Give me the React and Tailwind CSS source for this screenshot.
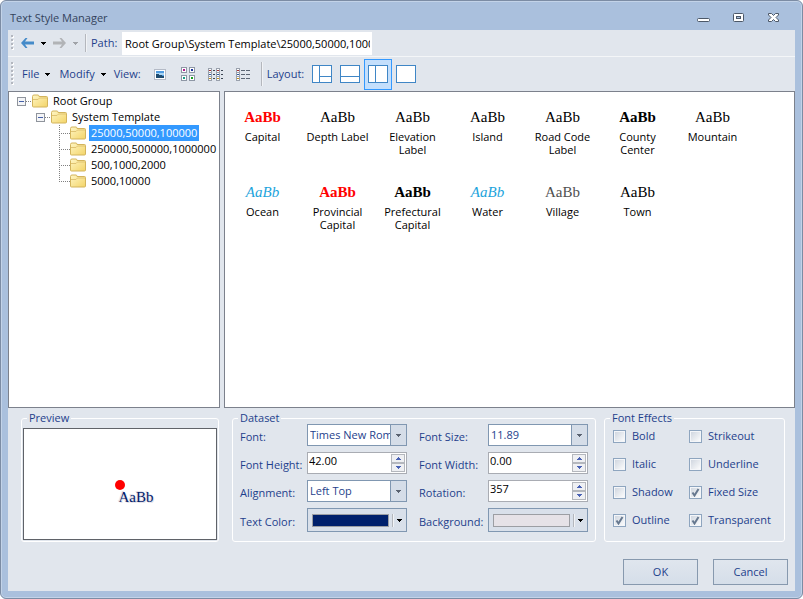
import React from "react";

function Caret({ className = "fill-black" }) {
  return (
    <svg width="5" height="3" viewBox="0 0 5 3" className={`shrink-0 ${className}`} aria-hidden="true" shapeRendering="crispEdges">
      <path d="M0 0h5v1h-1v1h-1v1h-1v-1h-1v-1h-1z" />
    </svg>
  );
}

function NavArrow({ className, flip }) {
  return (
    <svg width="13" height="10" viewBox="0 0 13 10" className={className} aria-hidden="true">
      <path d={flip ? "M6.500 0H8.500L13 5 8.500 10H6.500L9 6.500H0V3.500H9z" : "M6.500 0H4.500L0 5 4.500 10H6.500L4 6.500H13V3.500H4z"} />
    </svg>
  );
}

function Grip({ count }) {
  return (
    <svg width="3" height={count * 4} viewBox={`0 0 3 ${count * 4}`} className="ml-[3px] shrink-0" aria-hidden="true" shapeRendering="crispEdges">
      {Array.from({ length: count }, (_, i) => (
        <g key={i}>
          <rect x="1" y={i * 4 + 1} width="2" height="2" fill="#ffffff" />
          <rect x="0" y={i * 4} width="2" height="2" fill="#b3b7bf" />
        </g>
      ))}
    </svg>
  );
}

function Separator({ className }) {
  return <span className={`w-0.5 shrink-0 border-l border-[#b4b7bd] bg-[#f1f3f6] ${className}`} />;
}

const DOT_COLORS = ["#b0188c", "#18309c", "#189c84", "#18a020"];

function ViewIcon({ kind }) {
  if (kind === "thumbnail") {
    return (
      <svg width="12" height="11" viewBox="0 0 12 11" aria-hidden="true" shapeRendering="crispEdges">
        <rect x="0.500" y="0.500" width="11" height="10" fill="#fff" stroke="#b4bac6" />
        <rect x="2" y="2" width="8" height="7" fill="#4f9be0" />
        <rect x="2" y="4" width="8" height="2" fill="#a8d4f4" />
        <path d="M2 5h3v1h3v1h2v2H2z" fill="#1d4a6e" />
      </svg>
    );
  }
  if (kind === "icons") {
    return (
      <svg width="14" height="14" viewBox="0 0 14 14" aria-hidden="true" shapeRendering="crispEdges">
        {[[0, 0], [8, 0], [0, 8], [8, 8]].map(([x, y], i) => (
          <g key={i}>
            <rect x={x + 0.5} y={y + 0.5} width="5" height="5" fill="#fff" stroke="#8e97a5" />
            <rect x={x + 2} y={y + 2} width="2" height="2" fill={DOT_COLORS[i]} />
          </g>
        ))}
      </svg>
    );
  }
  const columns = kind === "list" ? [0, 8] : [0];
  return (
    <svg width="15" height="13" viewBox="0 0 15 13" aria-hidden="true" shapeRendering="crispEdges">
      {columns.map((x) =>
        [0, 4, 8].map((y, i) => (
          <g key={`${x}-${y}`}>
            <rect x={x + 0.5} y={y + 0.5} width="3" height="4" fill="#fff" stroke="#9aa1ad" />
            <rect x={x + 1} y={y + 2} width="2" height="1" fill={["#a83030", "#2858a0", "#c09018"][i]} />
            <rect x={x + 5} y={y + 2} width="2" height="1" fill="#3c4654" />
          </g>
        ))
      )}
      {kind === "details" &&
        [2, 6, 10].map((y) => (
          <g key={y} fill="#5c6674">
            <rect x="5" y={y} width="4" height="1" />
            <rect x="10" y={y} width="4" height="1" />
          </g>
        ))}
    </svg>
  );
}

const LAYOUTS = [
  { name: "Tree, list and properties", lines: "M7.500 0v18M8 11.500h12" },
  { name: "List and properties", lines: "M0 11.500h20" },
  { name: "Tree and list", lines: "M7.500 0v18", selected: true },
  { name: "List only", lines: "" },
];

function LayoutIcon({ lines }) {
  return (
    <svg width="20" height="18" viewBox="0 0 20 18" className="shrink-0" aria-hidden="true" shapeRendering="crispEdges">
      <rect x="0.500" y="0.500" width="19" height="17" fill="#fff" stroke="#3f86c6" />
      <path d={lines} fill="none" stroke="#3f86c6" />
    </svg>
  );
}

function Folder() {
  return (
    <svg width="16" height="14" viewBox="0 0 16 14" className="shrink-0" aria-hidden="true">
      <defs>
        <linearGradient id="folder" x1="0" y1="0" x2="1" y2="1">
          <stop offset="0" stopColor="#fff6c4" />
          <stop offset="1" stopColor="#f3d468" />
        </linearGradient>
      </defs>
      <path d="M0.500 2.500q0-1.500 1.500-1.500h4q1 0 1 1.500h7.500q1 0 1 1v8.500q0 1-1 1h-13q-1 0-1-1z" fill="url(#folder)" stroke="#d3b45c" />
      <path d="M1 5.500h5l1.500-1.500H15" fill="none" stroke="#dfc373" />
    </svg>
  );
}

function ExpandBox() {
  return (
    <svg width="9" height="9" viewBox="0 0 9 9" className="shrink-0" aria-hidden="true" shapeRendering="crispEdges">
      <rect x="0.500" y="0.500" width="8" height="8" fill="#f4f5f7" stroke="#8f949c" />
      <rect x="2" y="4" width="5" height="1" fill="#4560a8" />
    </svg>
  );
}

function Branch({ d, width }) {
  return (
    <svg width={width} height="16" viewBox={`0 0 ${width} 16`} className="shrink-0" aria-hidden="true" shapeRendering="crispEdges">
      <path d={d} fill="none" stroke="#808080" strokeDasharray="1 1" />
    </svg>
  );
}

const LEAVES = ["25000,50000,100000", "250000,500000,1000000", "500,1000,2000", "5000,10000"];

function Tree() {
  return (
    <ul className="w-[212px] shrink-0 overflow-auto border border-[#7c818c] bg-white pt-px pl-2 text-[11px] leading-4 whitespace-nowrap text-black">
      <li>
        <div className="flex h-4 items-center">
          <ExpandBox />
          <Branch width={6} d="M0 8.500h6" />
          <Folder />
          <span className="pl-[5px]">Root Group</span>
        </div>
        <ul>
          <li>
            <div className="flex h-4 items-center pl-[19px]">
              <ExpandBox />
              <Branch width={6} d="M0 8.500h6" />
              <Folder />
              <span className="pl-[5px]">System Template</span>
            </div>
            <ul>
              {LEAVES.map((name, i) => (
                <li key={name} className="flex h-4 items-center pl-[42px]">
                  <Branch width={11} d={i === LEAVES.length - 1 ? "M0.500 0v8M0 8.500h11" : "M0.500 0v16M0 8.500h11"} />
                  <Folder />
                  <span className={`ml-[3px] px-0.5 ${i === 0 ? "bg-[#3399ff] text-white" : ""}`}>{name}</span>
                </li>
              ))}
            </ul>
          </li>
        </ul>
      </li>
    </ul>
  );
}

const STYLES = [
  ["Capital", "font-bold text-[#ff0000]"],
  ["Depth Label", ""],
  ["Elevation Label", ""],
  ["Island", ""],
  ["Road Code Label", ""],
  ["County Center", "font-bold"],
  ["Mountain", ""],
  ["Ocean", "italic text-[#1ca4dc]"],
  ["Provincial Capital", "font-bold text-[#ff0000]"],
  ["Prefectural Capital", "font-bold"],
  ["Water", "italic text-[#1ca4dc]"],
  ["Village", "text-[#505050]"],
  ["Town", ""],
];

function StyleGrid() {
  return (
    <ul className="grid min-w-0 flex-1 auto-rows-[75px] grid-cols-[repeat(auto-fill,75px)] content-start border border-[#7c818c] bg-white text-black">
      {STYLES.map(([name, look]) => (
        <li key={name} className="px-1 pt-3 text-center">
          <div className={`h-[26px] font-['Liberation_Serif',serif] text-[15px] leading-[26px] ${look}`}>AaBb</div>
          <div className="text-[11px] leading-[13px]">{name}</div>
        </li>
      ))}
    </ul>
  );
}

function Group({ title, className, children }) {
  return (
    <fieldset className={`min-w-0 rounded-[3px] border border-white ${className}`}>
      <legend className="ml-[5px] px-0.5 leading-[12px]">{title}</legend>
      {children}
    </fieldset>
  );
}

function Field({ id, label, second, children }) {
  return (
    <>
      <label htmlFor={id} className={`pt-1 whitespace-nowrap ${second ? "pl-3" : ""}`}>
        {label}
      </label>
      {children}
    </>
  );
}

function Combo({ id, value }) {
  return (
    <div className="flex h-[22px] border border-[#8097b1] bg-white">
      <select id={id} defaultValue={value} className="min-w-0 flex-1 appearance-none overflow-hidden bg-white pl-0.5 text-clip outline-none">
        <option>{value}</option>
      </select>
      <span className="pointer-events-none flex w-4 shrink-0 items-center justify-center border-l border-[#8097b1] bg-[#d5dde8]">
        <Caret className="fill-[#5a6270]" />
      </span>
    </div>
  );
}

function Spinner({ id, value }) {
  return (
    <div className="flex h-[22px] border border-[#a9acb3] bg-white p-px">
      <input id={id} defaultValue={value} className="min-w-0 flex-1 bg-transparent pb-1 text-black outline-none" />
      <span className="flex w-[14px] shrink-0 flex-col">
        <button type="button" aria-label="Increase" className="flex flex-1 items-center justify-center border border-[#b4b7bd] bg-[#eff0f3]">
          <Caret className="rotate-180 fill-[#4a62b4]" />
        </button>
        <button type="button" aria-label="Decrease" className="flex flex-1 items-center justify-center border border-[#b4b7bd] bg-[#eff0f3]">
          <Caret className="fill-[#4a62b4]" />
        </button>
      </span>
    </div>
  );
}

function ColorButton({ id, swatch }) {
  return (
    <button id={id} type="button" className="flex h-6 items-center border border-[#8097b1] bg-[#d9e0ea] pr-[4px] pl-1">
      <span className={`h-[13px] flex-1 border border-[#9c9ea3] ${swatch}`} />
      <Separator className="mx-[3px] h-[13px]" />
      <Caret />
    </button>
  );
}

function Check({ label, checked }) {
  return (
    <label className="flex h-[22px] items-center gap-1.5 whitespace-nowrap">
      <span className="grid size-[13px] shrink-0 place-items-center">
        <input
          type="checkbox"
          defaultChecked={checked}
          className="peer col-start-1 row-start-1 size-[13px] appearance-none border border-[#8ea5bf] bg-linear-to-br from-[#ccd3dd] to-white shadow-[inset_0_0_0_1px_#f4f6f9]"
        />
        <svg width="9" height="9" viewBox="0 0 9 9" className="pointer-events-none invisible col-start-1 row-start-1 peer-checked:visible" aria-hidden="true">
          <path d="M1.500 4.500 3.500 7.500 7.500 1" fill="none" stroke="#66788f" strokeWidth="2" />
        </svg>
      </span>
      {label}
    </label>
  );
}

function WindowButton({ label, children }) {
  return (
    <button type="button" aria-label={label} className="flex size-[15px] items-center justify-center">
      <svg width="13" height="13" viewBox="0 0 13 13" aria-hidden="true">
        {children}
      </svg>
    </button>
  );
}

export default function App() {
  return (
    <div className="flex min-h-screen flex-col rounded-md border border-[#7c8ca4] bg-[#aac0dd] px-[7px] pb-[7px] font-['Open_Sans','Noto_Sans',sans-serif] text-[11px] leading-4 text-[#1e3f8c] shadow-[inset_0_0_0_1px_#c3d3e8]">
      <header className="flex h-[29px] items-center pt-1 pl-0.5">
        <h1 className="flex-1 text-[11px] text-[#33435c]">Text Style Manager</h1>
        <div className="flex gap-5 pr-[14px]">
          <WindowButton label="Minimize">
            <rect x="0.500" y="7.500" width="12" height="3" rx="1" fill="#fff" stroke="#4c5868" />
          </WindowButton>
          <WindowButton label="Maximize">
            <rect x="1.500" y="2.500" width="10" height="8" rx="1" fill="#fff" stroke="#4c5868" />
            <rect x="4.500" y="5.500" width="4" height="2" fill="#aac0dd" stroke="#4c5868" />
          </WindowButton>
          <WindowButton label="Close">
            <path d="M1.500 2.500h3l2 2 2-2h3v1.500L9 6.500l2.500 2.500v1.500h-3l-2-2-2 2h-3V9L4 6.500 1.500 4z" fill="#fff" stroke="#4c5868" />
          </WindowButton>
        </div>
      </header>

      <main className="flex flex-1 flex-col bg-[#e1e6ed]">
        <div className="flex h-[27px] items-center border-b border-[#f4f6f8]">
          <Grip count={4} />
          <button type="button" aria-label="Back" className="ml-[7px]">
            <NavArrow className="fill-[#458bc9]" />
          </button>
          <button type="button" aria-label="Back history" className="px-[7px]">
            <Caret />
          </button>
          <button type="button" aria-label="Forward">
            <NavArrow flip className="fill-[#b1b3b6]" />
          </button>
          <button type="button" aria-label="Forward history" className="px-[7px]">
            <Caret className="fill-[#a0a3a8]" />
          </button>
          <Separator className="h-[18px]" />
          <label htmlFor="path" className="w-[35px] pl-1">Path:</label>
          <input
            id="path"
            defaultValue="Root Group\System Template\25000,50000,100000"
            className="h-[23px] w-[250px] border-x-2 border-white bg-white pl-px text-black outline-none"
          />
        </div>

        <div className="flex h-[34px] items-center">
          <Grip count={6} />
          <button type="button" className="ml-2 flex items-center gap-1.5">
            File <Caret />
          </button>
          <button type="button" className="ml-[9px] flex items-center gap-1.5">
            Modify <Caret />
          </button>
          <span className="ml-2 w-8">View:</span>
          {["thumbnail", "icons", "list", "details"].map((kind) => (
            <button key={kind} type="button" aria-label={kind} className="flex h-7 w-7 items-center justify-center">
              <ViewIcon kind={kind} />
            </button>
          ))}
          <Separator className="ml-[3px] h-6" />
          <span className="w-[45px] pl-1">Layout:</span>
          {LAYOUTS.map(({ name, lines, selected }) => (
            <button
              key={name}
              type="button"
              aria-label={name}
              className={`flex h-[31px] w-7 items-center justify-center ${selected ? "border border-[#3399ff] bg-[#c4dffc]" : ""}`}
            >
              <LayoutIcon lines={lines} />
            </button>
          ))}
        </div>

        <div className="flex flex-1 gap-1">
          <Tree />
          <StyleGrid />
        </div>

        <form className="flex flex-col" onSubmit={(e) => e.preventDefault()}>
          <div className="mt-1 mr-[10px] ml-[13px] flex items-stretch">
            <Group title="Preview" className="w-[198px]">
              <div className="mx-px mt-1 mb-px flex h-[112px] items-center justify-center border border-[#5f6268] bg-white">
                <div className="flex flex-col pt-4 pl-7">
                  <span className="size-[10px] rounded-full bg-[#ff0000]" />
                  <span className="pl-1 font-['Liberation_Serif',serif] text-[15px] leading-[14px] text-[#00206c] [text-shadow:1px_1px_0_#e4e0e6,-1px_-1px_0_#e4e0e6]">AaBb</span>
                </div>
              </div>
            </Group>

            <Group title="Dataset" className="ml-[13px] flex-1">
              <div className="grid grid-cols-[67px_minmax(0,1fr)_81px_minmax(0,1fr)] items-center gap-y-1.5 px-[7px]">
                <Field id="font" label="Font:"><Combo id="font" value="Times New Roman" /></Field>
                <Field id="size" label="Font Size:" second><Combo id="size" value="11.89" /></Field>
                <Field id="height" label="Font Height:"><Spinner id="height" value="42.00" /></Field>
                <Field id="width" label="Font Width:" second><Spinner id="width" value="0.00" /></Field>
                <Field id="align" label="Alignment:"><Combo id="align" value="Left Top" /></Field>
                <Field id="rotation" label="Rotation:" second><Spinner id="rotation" value="357" /></Field>
                <Field id="color" label="Text Color:"><ColorButton id="color" swatch="bg-[#00206c]" /></Field>
                <Field id="background" label="Background:" second><ColorButton id="background" swatch="bg-[#e6e2e7]" /></Field>
              </div>
            </Group>

            <Group title="Font Effects" className="ml-2 w-[181px]">
              <div className="grid grid-cols-[76px_1fr] gap-y-1.5 pt-px pl-2">
                <Check label="Bold" />
                <Check label="Strikeout" />
                <Check label="Italic" />
                <Check label="Underline" />
                <Check label="Shadow" />
                <Check label="Fixed Size" checked />
                <Check label="Outline" checked />
                <Check label="Transparent" checked />
              </div>
            </Group>
          </div>

          <div className="mt-[17px] flex justify-end gap-[15px] pr-[7px] pb-1.5">
            <button type="submit" className="h-[26px] w-[75px] border border-[#8799ae] bg-linear-to-b from-[#e0e6ee] to-[#d5dee9]">OK</button>
            <button type="button" className="h-[26px] w-[75px] border border-[#8799ae] bg-linear-to-b from-[#e0e6ee] to-[#d5dee9]">Cancel</button>
          </div>
        </form>
      </main>
    </div>
  );
}
